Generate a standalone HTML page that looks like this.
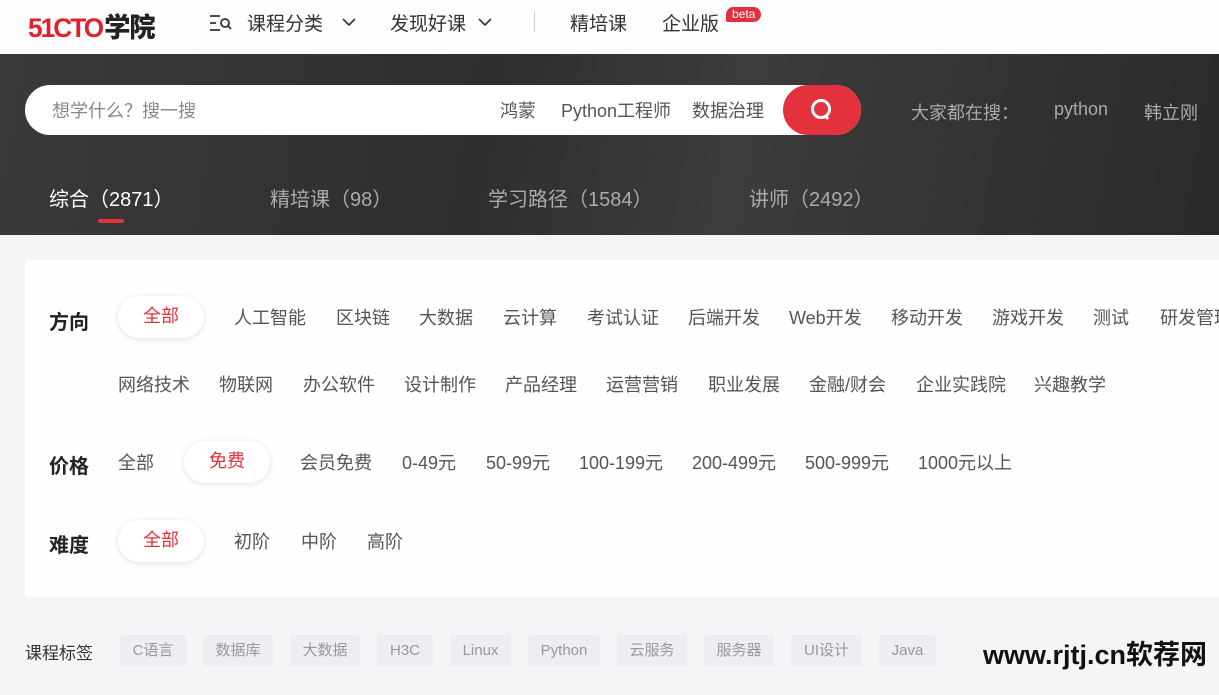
<!DOCTYPE html>
<html><head><meta charset="utf-8"><style>
*{margin:0;padding:0;box-sizing:border-box}
body{width:1219px;height:695px;overflow:hidden;background:#f4f5f7;font-family:"Liberation Sans","Noto Sans CJK SC",sans-serif;position:relative;color:#333}
.a{position:absolute;white-space:nowrap}
.top{position:absolute;left:0;top:0;width:1219px;height:54px;background:#fcfdfc}
.hero{position:absolute;left:0;top:54px;width:1219px;height:181px;background:linear-gradient(100deg,#3a3a3a,#2e2e2e 40%,#3c3c3c 60%,#2a2a2a)}
.card{position:absolute;left:25px;top:260px;width:1200px;height:337px;background:#fdfefd;border-radius:4px}
.f{font-size:18px;color:#555}
.pill{position:absolute;height:42px;border-radius:21px;background:#fff;box-shadow:0 1px 6px rgba(0,0,0,.12);color:#e0313d;font-size:18px;line-height:40px;text-align:center}
.h{font-size:20px;font-weight:bold;color:#222}
.tag{position:absolute;top:635px;height:31px;background:#eceef1;border-radius:2px;color:#999;font-size:15px;line-height:31px;text-align:center}
</style></head><body>
<div class="top"></div>
<div class="a" style="left:28px;top:6px;font-size:27px;font-weight:900;letter-spacing:-1px;transform:scaleX(0.97);transform-origin:left"><span style="color:#e0202c;letter-spacing:-2px">51CTO</span><span style="color:#222;margin-left:2px">学院</span></div>
<svg class="a" style="left:209px;top:13px" width="26" height="20" viewBox="0 0 26 20"><path d="M1 3h10M1 10h6M1 17h10" stroke="#333" stroke-width="1.8"/><circle cx="16" cy="10" r="4" fill="none" stroke="#333" stroke-width="1.8"/><path d="M19 13l3 3" stroke="#333" stroke-width="1.8"/></svg>
<div class="a" style="left:247px;top:9px;font-size:19px;color:#333">课程分类</div>
<svg class="a" style="left:341px;top:17px" width="16" height="10"><path d="M2 2l6 6 6-6" fill="none" stroke="#333" stroke-width="1.6"/></svg>
<div class="a" style="left:390px;top:9px;font-size:19px;color:#333">发现好课</div>
<svg class="a" style="left:477px;top:17px" width="16" height="10"><path d="M2 2l6 6 6-6" fill="none" stroke="#333" stroke-width="1.6"/></svg>
<div class="a" style="left:534px;top:12px;width:1px;height:20px;background:#ccc"></div>
<div class="a" style="left:570px;top:9px;font-size:19px;color:#333">精培课</div>
<div class="a" style="left:662px;top:9px;font-size:19px;color:#333">企业版</div>
<div class="a" style="left:726px;top:7px;background:#e0313d;color:#fff;font-size:12px;border-radius:8px 8px 8px 2px;padding:0 6px;line-height:15px">beta</div>
<div class="hero"></div>
<div class="a" style="left:25px;top:85px;width:836px;height:50px;background:#fff;border-radius:25px"></div>
<div class="a" style="left:783px;top:85px;width:78px;height:50px;background:#e3323e;border-radius:25px"></div>
<svg class="a" style="left:808px;top:96px" width="28" height="28"><circle cx="13" cy="13" r="8.5" fill="none" stroke="#fff" stroke-width="3"/><path d="M17 19l3 4" stroke="#fff" stroke-width="3"/></svg>
<div class="a" style="left:52px;top:97px;font-size:18px;color:#888">想学什么？搜一搜</div>
<div class="a" style="left:500px;top:97px;font-size:18px;color:#555">鸿蒙</div>
<div class="a" style="left:561px;top:97px;font-size:18px;color:#555">Python工程师</div>
<div class="a" style="left:692px;top:97px;font-size:18px;color:#555">数据治理</div>
<div class="a" style="left:911px;top:99px;font-size:18px;color:#aaa">大家都在搜：</div>
<div class="a" style="left:1054px;top:99px;font-size:18px;color:#aaa">python</div>
<div class="a" style="left:1144px;top:99px;font-size:18px;color:#aaa">韩立刚</div>
<div class="a" style="left:49px;top:183px;font-size:20px;color:#fff">综合（2871）</div>
<div class="a" style="left:98px;top:219px;width:26px;height:4px;background:#e3323e;border-radius:2px"></div>
<div class="a" style="left:270px;top:183px;font-size:20px;color:#aaa">精培课（98）</div>
<div class="a" style="left:488px;top:183px;font-size:20px;color:#aaa">学习路径（1584）</div>
<div class="a" style="left:749px;top:183px;font-size:20px;color:#aaa">讲师（2492）</div>
<div class="card"></div>
<div class="a h" style="left:49px;top:306px">方向</div>
<div class="pill" style="left:118px;top:296px;width:86px">全部</div>
<div class="a f" style="left:234px;top:304px">人工智能</div>
<div class="a f" style="left:336px;top:304px">区块链</div>
<div class="a f" style="left:419px;top:304px">大数据</div>
<div class="a f" style="left:503px;top:304px">云计算</div>
<div class="a f" style="left:587px;top:304px">考试认证</div>
<div class="a f" style="left:688px;top:304px">后端开发</div>
<div class="a f" style="left:789px;top:304px">Web开发</div>
<div class="a f" style="left:891px;top:304px">移动开发</div>
<div class="a f" style="left:992px;top:304px">游戏开发</div>
<div class="a f" style="left:1093px;top:304px">测试</div>
<div class="a f" style="left:1160px;top:304px">研发管理</div>
<div class="a f" style="left:118px;top:371px">网络技术</div>
<div class="a f" style="left:219px;top:371px">物联网</div>
<div class="a f" style="left:303px;top:371px">办公软件</div>
<div class="a f" style="left:404px;top:371px">设计制作</div>
<div class="a f" style="left:505px;top:371px">产品经理</div>
<div class="a f" style="left:606px;top:371px">运营营销</div>
<div class="a f" style="left:708px;top:371px">职业发展</div>
<div class="a f" style="left:809px;top:371px">金融/财会</div>
<div class="a f" style="left:916px;top:371px">企业实践院</div>
<div class="a f" style="left:1034px;top:371px">兴趣教学</div>
<div class="a h" style="left:49px;top:450px">价格</div>
<div class="a f" style="left:118px;top:449px">全部</div>
<div class="pill" style="left:184px;top:441px;width:86px">免费</div>
<div class="a f" style="left:300px;top:449px">会员免费</div>
<div class="a f" style="left:402px;top:449px">0-49元</div>
<div class="a f" style="left:486px;top:449px">50-99元</div>
<div class="a f" style="left:579px;top:449px">100-199元</div>
<div class="a f" style="left:692px;top:449px">200-499元</div>
<div class="a f" style="left:805px;top:449px">500-999元</div>
<div class="a f" style="left:918px;top:449px">1000元以上</div>
<div class="a h" style="left:49px;top:529px">难度</div>
<div class="pill" style="left:118px;top:520px;width:86px">全部</div>
<div class="a f" style="left:234px;top:528px">初阶</div>
<div class="a f" style="left:301px;top:528px">中阶</div>
<div class="a f" style="left:367px;top:528px">高阶</div>
<div class="a" style="left:25px;top:639px;font-size:17px;color:#333">课程标签</div>
<div class="tag" style="left:120px;width:66px">C语言</div>
<div class="tag" style="left:203px;width:70px">数据库</div>
<div class="tag" style="left:290px;width:70px">大数据</div>
<div class="tag" style="left:377px;width:56px">H3C</div>
<div class="tag" style="left:450px;width:61px">Linux</div>
<div class="tag" style="left:528px;width:72px">Python</div>
<div class="tag" style="left:617px;width:70px">云服务</div>
<div class="tag" style="left:704px;width:70px">服务器</div>
<div class="tag" style="left:791px;width:71px">UI设计</div>
<div class="tag" style="left:879px;width:57px">Java</div>
<div class="a" style="left:983px;top:633px;font-size:27px;font-weight:bold;color:#111">www.rjtj.cn软荐网</div>
</body></html>
